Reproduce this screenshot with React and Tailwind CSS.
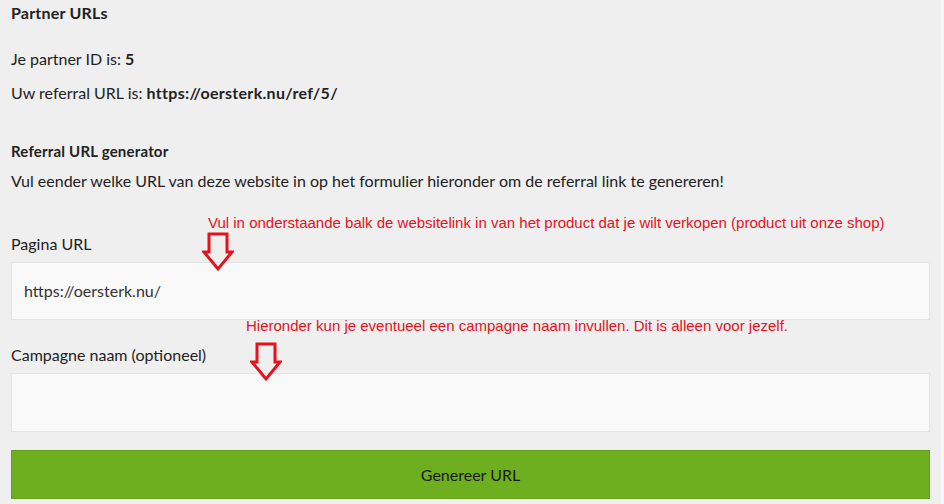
import React from "react";

function Arrow({ className }) {
  return (
    <svg className={className} width="32" height="40" viewBox="0 0 32 40" fill="none">
      <polygon
        points="7,2 25,2 25,20 30,20 16,37 2,20 7,20"
        stroke="#e5121c"
        strokeWidth="3"
        strokeLinejoin="miter"
        fill="none"
      />
    </svg>
  );
}

const red = { fontFamily: "'Liberation Sans', Arial, sans-serif" };

export default function App() {
  return (
    <div className="w-[944px] h-[504px] bg-[#f5f5f5] overflow-hidden">
      <div
        className="relative w-[941px] h-[504px] bg-[#efefef] px-[11px] pt-[1px] text-[#222] text-[16px] leading-6 flex flex-col"
        style={{ fontFamily: "Lato, 'Open Sans', sans-serif" }}
      >
        <section className="flex flex-col">
          <h2 className="font-bold text-[16px] leading-6 tracking-[0.2px]">Partner URLs</h2>
          <div className="mt-[22px] flex flex-col gap-[10px]">
            <p>
              Je partner ID is: <b className="tracking-[0.2px]">5</b>
            </p>
            <p>
              Uw referral URL is: <b className="tracking-[0.3px]">https://oersterk.nu/ref/5/</b>
            </p>
          </div>
        </section>

        <section className="mt-[34px] flex flex-col gap-[6px]">
          <h3 className="font-bold text-[15px] leading-6 tracking-[0.2px]">Referral URL generator</h3>
          <p>
            Vul eender welke URL van deze website in op het formulier hieronder om de referral link te genereren!
          </p>
        </section>

        <form className="mt-[39px] flex flex-col">
          <div className="flex flex-col gap-[6px]">
            <label>Pagina URL</label>
            <div className="h-[58px] bg-[#f9f9f9] border border-[#e4e4e4] flex items-center px-[12px] text-[#333]">
              https://oersterk.nu/
            </div>
          </div>
          <div className="mt-[23px] flex flex-col gap-[6px]">
            <label>Campagne naam (optioneel)</label>
            <div className="h-[59px] bg-[#f9f9f9] border border-[#e4e4e4]"></div>
          </div>
          <button
            type="button"
            className="mt-[18px] w-full h-[49px] bg-[#6daf1f] border border-[#64a01b] text-[#1a1a1a] text-[16px] flex items-center justify-center"
          >
            Genereer URL
          </button>
        </form>

        <div
          className="absolute left-[208px] top-[214px] text-[#e5121c] text-[15px] leading-[18px] whitespace-nowrap"
          style={red}
        >
          Vul in onderstaande balk de websitelink in van het product dat je wilt verkopen (product uit onze shop)
        </div>
        <Arrow className="absolute left-[202px] top-[232px]" />

        <div
          className="absolute left-[246px] top-[317px] text-[#e5121c] text-[15px] leading-[18px] whitespace-nowrap"
          style={red}
        >
          Hieronder kun je eventueel een campagne naam invullen. Dit is alleen voor jezelf.
        </div>
        <Arrow className="absolute left-[250px] top-[342px]" />
      </div>
    </div>
  );
}
